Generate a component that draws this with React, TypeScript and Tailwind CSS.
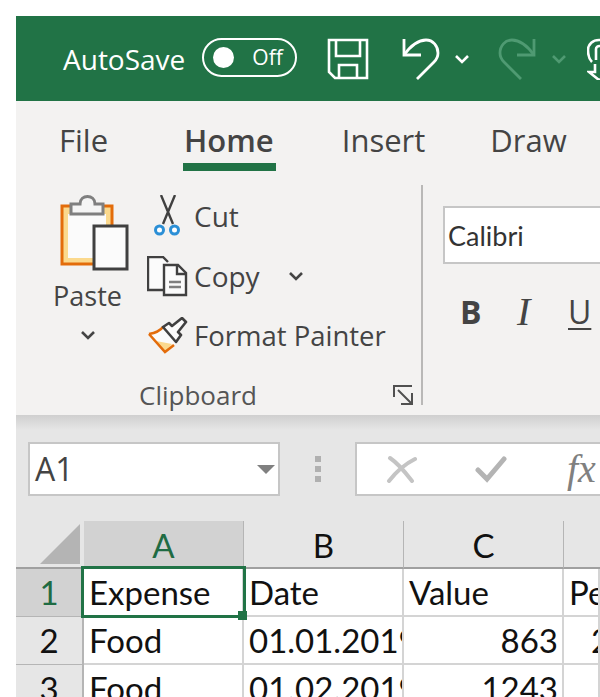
import React from "react";

const ui = "font-['Open_Sans',sans-serif]";
const cell = "font-['Lato',sans-serif]";

function Chevron({ className = "", stroke = "#fff" }: { className?: string; stroke?: string }) {
  return (
    <svg className={className} width="16" height="10" viewBox="0 0 16 10" fill="none">
      <path d="M2 2l6 6 6-6" stroke={stroke} strokeWidth="2.6" />
    </svg>
  );
}

function SaveIcon() {
  return (
    <svg width="42" height="42" viewBox="0 0 42 42" fill="none" stroke="#fff" strokeWidth="2.6">
      <path d="M2 2h38v38H8l-6-6z" />
      <path d="M9 2v16h24V2" />
      <path d="M12 40V27h18v13" />
    </svg>
  );
}

function UndoIcon({ flip = false, stroke = "#fff" }: { flip?: boolean; stroke?: string }) {
  return (
    <svg width="38" height="42" viewBox="0 0 38 42" fill="none" stroke={stroke} strokeWidth="2.8" className={flip ? "-scale-x-100" : ""}>
      <path d="M2 1v16h17" />
      <path d="M2 17 C10 6 17 2 24 2c7 0 12 6 12 13 0 4-2 7-4 9L15 41" />
    </svg>
  );
}

function TouchIcon() {
  return (
    <svg width="20" height="42" viewBox="0 0 20 42" fill="none" stroke="#fff" strokeWidth="2.6">
      <path d="M5 24C1 20 1 15 1 12 1 6 6 2 12 2s9 4 9 10" />
      <path d="M9 22V11c0-4 7-4 7 0v11" />
      <path d="M8 26v8l-6 0 10 8 10-4" />
    </svg>
  );
}

function PasteIcon() {
  return (
    <svg width="70" height="76" viewBox="60 195 70 76" fill="none">
      <rect x="62" y="206" width="50" height="58" fill="#fbd98d" stroke="#e36c0a" strokeWidth="3" />
      <rect x="68" y="214" width="38" height="44" fill="#fbfbfb" />
      <path d="M71 204h9c0-10 15-10 15 0h8v10H71z" fill="#f5f5f5" stroke="#7f7f7f" strokeWidth="3" />
      <rect x="94" y="226" width="33" height="43" fill="#fbfbfb" stroke="#404040" strokeWidth="3" />
    </svg>
  );
}

function ScissorsIcon() {
  return (
    <svg width="30" height="42" viewBox="152 194 30 42" fill="none">
      <path d="M161 194l12 29M175 194l-12 29" stroke="#404040" strokeWidth="2.4" />
      <circle cx="159.500" cy="229" r="4" stroke="#2b8fd6" strokeWidth="3" fill="#fff" />
      <circle cx="174.500" cy="229" r="4" stroke="#2b8fd6" strokeWidth="3" fill="#fff" />
    </svg>
  );
}

function CopyIcon() {
  return (
    <svg width="41" height="41" viewBox="147 254 41 41" fill="none" stroke="#404040" strokeWidth="2.4">
      <path d="M164 288h-16v-33h15l5 5" fill="#fbfbfb" />
      <path d="M164 263h14l8 8v22h-22z" fill="#fbfbfb" />
      <path d="M177 263v9h9" />
      <path d="M169 280h12M169 285h12" stroke="#7f7f7f" />
    </svg>
  );
}

function PainterIcon() {
  return (
    <svg width="41" height="38" viewBox="147 315 41 38" fill="none">
      <path d="M149 332c6-1 11-3 14-7l14 15-12 10z" fill="#fbfbfb" />
      <path d="M156 339l16 3-7 8z" fill="#fbd98d" />
      <path d="M149 332c6-1 11-3 14-7M149 332l16 18 9-7" stroke="#e36c0a" strokeWidth="2.6" />
      <path d="M163 325l6-4 3 3 10-8 4 4-8 10 3 3-5 7z" fill="#fbfbfb" stroke="#404040" strokeWidth="2.6" strokeLinejoin="round" />
    </svg>
  );
}

function LauncherIcon() {
  return (
    <svg className="absolute right-[8px] bottom-0" width="20" height="20" viewBox="0 0 20 20" fill="none" stroke="#505050" strokeWidth="2">
      <path d="M1 12V1h18" />
      <path d="M5 5l13 13M19 8v11H8" />
    </svg>
  );
}

function Tab({ label, className = "" }: { label: string; className?: string }) {
  return <span className={"leading-[78px] " + className}>{label}</span>;
}

function ClipboardGroup() {
  return (
    <div className="relative w-[407px] h-[220px] shrink-0 border-r-2 border-[#b9b8b7] flex flex-col">
      <div className="flex h-[182px] pt-[10px]">
        <div className="w-[131px] flex flex-col items-center pl-[12px]">
          <div className="ml-[15px]"><PasteIcon /></div>
          <div className="text-[27px] leading-[36px] text-[#444] mt-[7px]">Paste</div>
          <Chevron className="mt-[16px]" stroke="#444" />
        </div>
        <div className="flex flex-col">
          <div className="flex items-center h-[44px] -mt-[1px]">
            <div className="ml-[5px] w-[42px]"><ScissorsIcon /></div>
            <span className="text-[28px] text-[#444]">Cut</span>
          </div>
          <div className="flex items-center h-[42px] mt-[17px]">
            <div className="w-[47px]"><CopyIcon /></div>
            <span className="text-[28px] text-[#444]">Copy</span>
            <Chevron className="ml-[28px]" stroke="#444" />
          </div>
          <div className="flex items-center h-[42px] mt-[18px]">
            <div className="w-[47px]"><PainterIcon /></div>
            <span className="text-[27.5px] text-[#444] whitespace-nowrap">Format Painter</span>
          </div>
        </div>
      </div>
      <div className="text-[26px] leading-[36px] text-[#555] text-center w-[364px] mt-[-1px] whitespace-nowrap relative top-[11px]">Clipboard</div>
      <LauncherIcon />
    </div>
  );
}

function FontGroup() {
  return (
    <div className="pl-[20px] h-[220px]">
      <div className="w-[200px] h-[58px] mt-[21px] bg-white border-2 border-r-0 border-[#c6c6c6] flex items-center pl-[3px] pt-[2px] text-[27px] text-[#333] font-['Lato',sans-serif]">Calibri</div>
      <div className="flex items-center mt-[28px] h-[40px] text-[#444]">
        <span className="ml-[17px] w-[57px] text-[32px] font-bold">B</span>
        <span className="w-[51px] text-[40px] leading-none italic font-['Liberation_Serif',serif]">I</span>
        <span className="text-[32px] underline underline-offset-4 decoration-2">U</span>
      </div>
    </div>
  );
}

function FormulaBar() {
  return (
    <div className="flex h-[54px] mt-[12px] pl-[12px]">
      <div className="w-[252px] border-2 border-[#c6c6c6] bg-white flex items-center justify-between pl-[5px] pr-[3px] text-[32px] text-[#444]">
        <span>A1</span>
        <span className="w-0 h-0 border-x-[9px] border-x-transparent border-t-[9px] border-t-[#808080]" />
      </div>
      <div className="w-[75px] flex flex-col items-center justify-center gap-[4px]">
        <span className="w-[6px] h-[6px] bg-[#b0b0b0]" />
        <span className="w-[6px] h-[6px] bg-[#b0b0b0]" />
        <span className="w-[6px] h-[6px] bg-[#b0b0b0]" />
      </div>
      <div className="flex-1 border-2 border-r-0 border-[#c6c6c6] bg-white flex items-center pl-[29px]">
        <svg width="32" height="28" viewBox="0 0 32 28" fill="none" stroke="#c4c4c4" strokeWidth="4" strokeLinecap="round">
          <path d="M4 3c9 6 15 14 22 23M29 4C19 9 10 17 3 26" />
        </svg>
        <svg className="ml-[57px]" width="32" height="28" viewBox="0 0 32 28" fill="none" stroke="#b4b4b4" strokeWidth="5" strokeLinecap="round">
          <path d="M3 15l9 9L29 4" />
        </svg>
        <span className="ml-[60px] text-[40px] leading-none italic text-[#808080] font-['Liberation_Serif',serif]">fx</span>
      </div>
    </div>
  );
}

const colHead = "flex items-center justify-center border-r border-[#b5b5b5] text-[33px] leading-none pt-[2px] " + cell;
const rowHead = "flex items-center justify-center border-r-2 border-b border-[#b5b5b5] text-[33px] leading-none " + cell;
const td = "overflow-hidden whitespace-nowrap border-r-2 border-b-2 border-[#d4d4d4] bg-white pl-[5px] pr-[4px] flex items-center text-[33px] leading-none text-[#111] " + cell;

function Grid() {
  return (
    <div className="relative grid grid-cols-[68px_160px_160px_160px_1fr] grid-rows-[48px_48px_48px_48px] mt-[25px]">
      <div className="border-b-2 border-[#a0a0a0] flex items-end justify-end pr-[4px] pb-[3px]">
        <span className="w-0 h-0 border-l-[40px] border-l-transparent border-b-[40px] border-b-[#b4b4b4]" />
      </div>
      <div className={colHead + " bg-[#d2d2d2] text-[#1f6b43] border-b-2 border-b-[#217346]"}>A</div>
      <div className={colHead + " border-b-2 border-b-[#a0a0a0] text-[#111]"}>B</div>
      <div className={colHead + " border-b-2 border-b-[#a0a0a0] text-[#111]"}>C</div>
      <div className="border-b-2 border-[#a0a0a0]" />

      <div className={rowHead + " bg-[#d2d2d2] text-[#1f6b43]"}>1</div>
      <div className={td}>Expense</div>
      <div className={td}>Date</div>
      <div className={td}>Value</div>
      <div className={td}>Period</div>

      <div className={rowHead + " text-[#111]"}>2</div>
      <div className={td}>Food</div>
      <div className={td}>01.01.2019</div>
      <div className={td + " justify-end"}>863</div>
      <div className={td + " pl-[27px]"}>2</div>

      <div className={rowHead + " text-[#111]"}>3</div>
      <div className={td}>Food</div>
      <div className={td}>01.02.2019</div>
      <div className={td + " justify-end"}>1243</div>
      <div className={td} />

      <div className="absolute left-[65px] top-[45px] w-[165px] h-[52px] border-[3px] border-[#217346] pointer-events-none">
        <span className="absolute -right-[4px] -bottom-[5px] w-[9px] h-[9px] bg-[#217346]" />
      </div>
    </div>
  );
}

export default function App() {
  return (
    <div className={"w-[600px] h-[697px] overflow-hidden bg-white pt-4 pl-4 " + ui}>
      <div className="h-[85px] bg-[#217346] flex items-center overflow-hidden text-white">
        <span className="ml-[47px] text-[28px] leading-none">AutoSave</span>
        <div className="ml-[17px] w-[95px] h-[39px] shrink-0 rounded-full border-2 border-white flex items-center pl-[9px] -mt-[2px]">
          <span className="w-[21px] h-[21px] rounded-full bg-white" />
          <span className="ml-[18px] text-[21px] leading-none">Off</span>
        </div>
        <div className="ml-[30px] shrink-0"><SaveIcon /></div>
        <div className="ml-[33px] shrink-0"><UndoIcon /></div>
        <Chevron className="ml-[14px] shrink-0" />
        <div className="ml-[28px] shrink-0"><UndoIcon flip stroke="#4f9a72" /></div>
        <Chevron className="ml-[15px] shrink-0" stroke="#4f9a72" />
        <div className="ml-[20px] shrink-0"><TouchIcon /></div>
      </div>
      <div className="h-[314px] bg-[#f3f2f1] overflow-hidden">
        <div className="flex h-[70px] items-start text-[31px] text-[#444]">
          <Tab label="File" className="ml-[43px]" />
          <div className="relative ml-[76px] h-[70px]">
            <Tab label="Home" className="font-semibold" />
            <span className="absolute -left-[1px] -right-[2px] bottom-0 h-[8px] bg-[#217346]" />
          </div>
          <Tab label="Insert" className="ml-[68px]" />
          <Tab label="Draw" className="ml-[65px]" />
        </div>
        <div className="flex mt-[14px]">
          <ClipboardGroup />
          <FontGroup />
        </div>
      </div>
      <div className="h-[282px] bg-[#e6e6e6] bg-gradient-to-b from-[#cfcfcf] to-[#e6e6e6] bg-[length:100%_15px] bg-no-repeat overflow-hidden pt-[15px]">
        <FormulaBar />
        <Grid />
      </div>
    </div>
  );
}
